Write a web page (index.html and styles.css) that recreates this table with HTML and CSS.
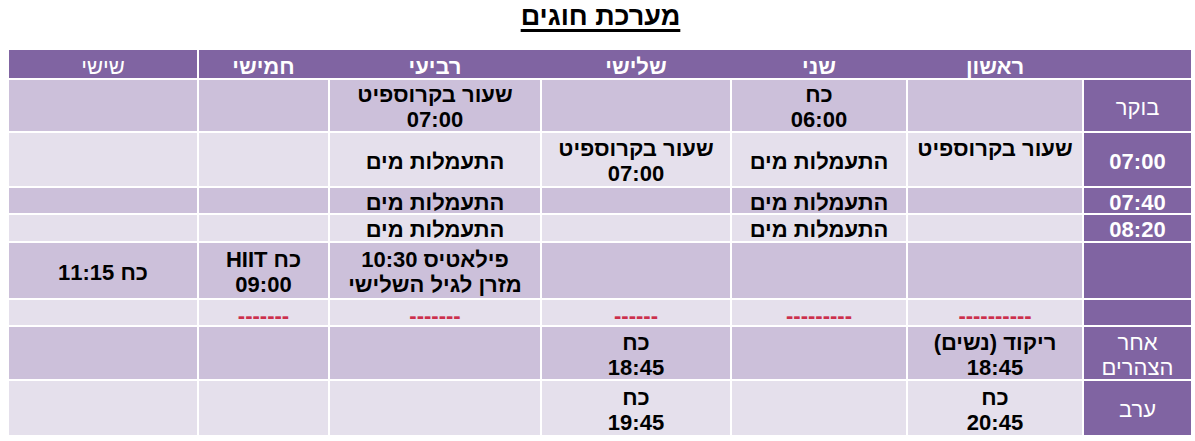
FILE: index.html
```html
<!DOCTYPE html>
<html lang="he" dir="rtl">
<head>
<meta charset="utf-8">
<title>מערכת חוגים</title>
<link rel="stylesheet" href="styles.css">
</head>
<body>
<div class="page">
  <h1 class="title"><span>מערכת חוגים</span></h1>
  <div class="schedule">
    <div class="head">
      <div class="hcell"></div>
      <div class="hcell">ראשון</div>
      <div class="hcell">שני</div>
      <div class="hcell">שלישי</div>
      <div class="hcell">רביעי</div>
      <div class="hcell">חמישי</div>
      <div class="hcell thin sep">שישי</div>
    </div>
    <div class="body">
      <div class="row dark">
        <div class="lab">בוקר</div>
        <div class="c"></div>
        <div class="c">כח<br>06:00</div>
        <div class="c"></div>
        <div class="c">שעור בקרוספיט<br>07:00</div>
        <div class="c"></div>
        <div class="c"></div>
      </div>
      <div class="row light">
        <div class="lab b">07:00</div>
        <div class="c top">שעור בקרוספיט</div>
        <div class="c">התעמלות מים</div>
        <div class="c">שעור בקרוספיט<br>07:00</div>
        <div class="c">התעמלות מים</div>
        <div class="c"></div>
        <div class="c"></div>
      </div>
      <div class="row dark">
        <div class="lab b">07:40</div>
        <div class="c"></div>
        <div class="c">התעמלות מים</div>
        <div class="c"></div>
        <div class="c">התעמלות מים</div>
        <div class="c"></div>
        <div class="c"></div>
      </div>
      <div class="row light">
        <div class="lab b">08:20</div>
        <div class="c"></div>
        <div class="c">התעמלות מים</div>
        <div class="c"></div>
        <div class="c">התעמלות מים</div>
        <div class="c"></div>
        <div class="c"></div>
      </div>
      <div class="row dark">
        <div class="lab"></div>
        <div class="c"></div>
        <div class="c"></div>
        <div class="c"></div>
        <div class="c">פילאטיס 10:30<br>מזרן לגיל השלישי</div>
        <div class="c">כח HIIT<br>09:00</div>
        <div class="c">כח 11:15</div>
      </div>
      <div class="row light">
        <div class="lab"></div>
        <div class="c dash">----------</div>
        <div class="c dash">---------</div>
        <div class="c dash">------</div>
        <div class="c dash">-------</div>
        <div class="c dash">-------</div>
        <div class="c"></div>
      </div>
      <div class="row dark">
        <div class="lab">אחר<br>הצהרים</div>
        <div class="c">ריקוד (נשים)<br>18:45</div>
        <div class="c"></div>
        <div class="c">כח<br>18:45</div>
        <div class="c"></div>
        <div class="c"></div>
        <div class="c"></div>
      </div>
      <div class="row light">
        <div class="lab">ערב</div>
        <div class="c">כח<br>20:45</div>
        <div class="c"></div>
        <div class="c">כח<br>19:45</div>
        <div class="c"></div>
        <div class="c"></div>
        <div class="c"></div>
      </div>
    </div>
  </div>
</div>
</body>
</html>
```

FILE: styles.css
```css
html, body {
  margin: 0;
  padding: 0;
  background: #ffffff;
}

body {
  font-family: "Liberation Sans", Arial, "DejaVu Sans", sans-serif;
  color: #000;
}

.page {
  width: 1195px;
  direction: rtl;
}

.title {
  margin: 0;
  padding: 2px 0 0 6px;
  height: 50px;
  box-sizing: border-box;
  text-align: center;
  font-size: 27px;
  font-weight: bold;
  line-height: 28px;
}

.title span {
  text-decoration: underline;
  text-decoration-thickness: 3px;
  text-underline-offset: 4px;
}

.schedule {
  width: 1182px;
  margin: 0 4px 0 9px;
  font-size: 22px;
}

.head,
.body {
  display: grid;
  grid-template-columns: 107px 174px 174px 188px 210px 129px 188px;
  column-gap: 2px;
  direction: rtl;
}

.head {
  background: #8064a2;
  height: 28px;
  margin-bottom: 2px;
}

.hcell {
  color: #fff;
  font-weight: bold;
  text-align: center;
  line-height: 28px;
  padding-top: 3px;
}

.hcell.thin {
  font-weight: normal;
}

.hcell.sep {
  box-shadow: 2px 0 0 #fff;
}

.body {
  grid-template-rows: 51px 53px 25px 26px 55px 25px 52px 54px;
  row-gap: 2px;
}

.row {
  display: contents;
}

.c,
.lab {
  display: flex;
  flex-direction: column;
  align-items: center;
  justify-content: center;
  text-align: center;
  line-height: 25px;
  font-weight: bold;
  padding-top: 3px;
}

.lab {
  background: #8064a2;
  color: #fff;
  font-weight: normal;
}

.lab.b {
  font-weight: bold;
}

.dark .c {
  background: #ccc0da;
}

.light .c {
  background: #e5e0ec;
}

.c.top {
  justify-content: flex-start;
  padding-top: 3px;
}

.c.dash {
  color: #cc2f4c;
  padding-top: 5px;
}
```
